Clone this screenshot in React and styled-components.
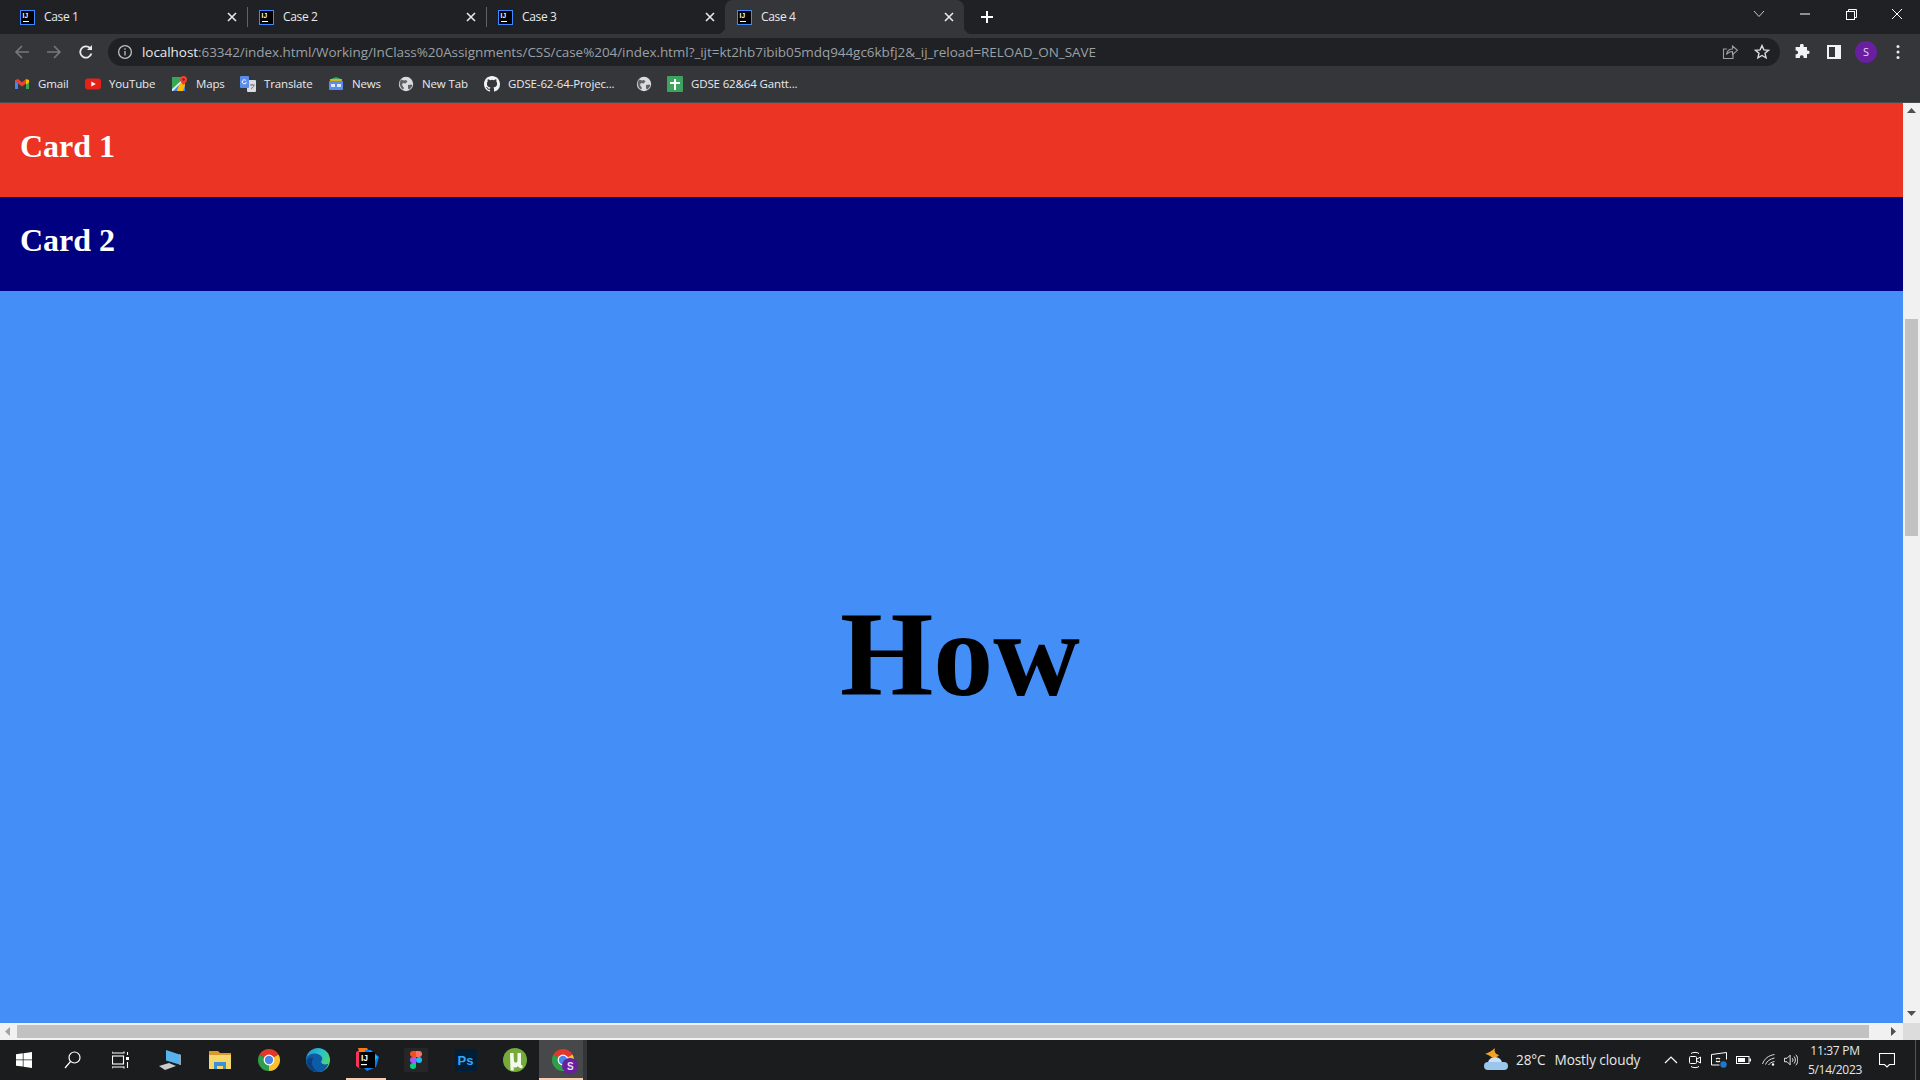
import React from "react";
import styled, { createGlobalStyle } from "styled-components";

const Global = createGlobalStyle`
  html, body { margin: 0; padding: 0; overflow: hidden; background: #fff; }
  #root { width: 1920px; height: 1080px; }
`;
const UI = `"Open Sans", "Noto Sans", sans-serif`;

const Screen = styled.div`width:1920px;height:1080px;display:flex;flex-direction:column;overflow:hidden;`;

/* tab strip */
const TabStrip = styled.div`height:34px;background:#202124;display:flex;padding-left:8px;flex:none;`;
const Tab = styled.div`
  width:239px;height:34px;box-sizing:border-box;display:flex;align-items:center;padding:0 7px 0 12px;position:relative;
  background:${p => (p.$active ? "#35363a" : "transparent")};
  border-radius:8px 8px 0 0;
  ${p => p.$sep && `&::after{content:"";position:absolute;right:-1px;top:7px;width:1px;height:20px;background:#5f6368;}`}
  ${p => p.$active && `
    &::before,&::after{content:"";position:absolute;bottom:0;width:8px;height:8px;}
    &::before{left:-8px;background:radial-gradient(circle at 0 0,#202124 8px,#35363a 8.5px);}
    &::after{right:-8px;background:radial-gradient(circle at 100% 0,#202124 8px,#35363a 8.5px);}
  `}
`;
const TabTitle = styled.span`flex:1;margin-left:9px;font:12px/16px ${UI};letter-spacing:-.35px;color:#e8eaed;`;
const TabClose = styled.span`width:16px;height:16px;display:flex;align-items:center;justify-content:center;`;
const NewTab = styled.span`width:28px;height:34px;margin-left:9px;display:flex;align-items:center;justify-content:center;`;
const WinControls = styled.div`margin-left:auto;display:flex;`;
const WinBtn = styled.span`width:46px;height:28px;display:flex;align-items:center;justify-content:center;`;

/* toolbar */
const Toolbar = styled.div`height:34px;background:#35363a;display:flex;align-items:flex-start;padding:4px 6px 0;box-sizing:border-box;flex:none;`;
const ToolBtn = styled.span`width:32px;height:28px;display:flex;align-items:center;justify-content:center;flex:none;`;
const Omnibox = styled.div`flex:1;height:28px;margin:0 6px;border-radius:14px;background:#202124;display:flex;align-items:center;padding-left:9px;padding-right:2px;`;
const Url = styled.div`flex:1;margin-left:9px;font:13.5px/18px ${UI};color:#9aa0a6;white-space:nowrap;letter-spacing:-.06px;`;
const Host = styled.span`color:#e8eaed;`;

/* bookmarks */
const Bookmarks = styled.div`height:35px;background:#35363a;border-bottom:1px solid #4b4c4f;box-sizing:border-box;display:flex;align-items:center;padding:0 0 2px 14px;flex:none;`;
const Bookmark = styled.div`width:${p => p.$w}px;display:flex;align-items:center;gap:8px;flex:none;font:11.5px/16px ${UI};letter-spacing:-.14px;color:#e8eaed;white-space:nowrap;`;

/* page */
const Viewport = styled.div`flex:none;height:920px;display:flex;`;
const Page = styled.main`flex:1;min-width:0;display:flex;flex-direction:column;overflow:hidden;`;
const Card = styled.section`height:94px;flex:none;background:${p => p.$bg};color:#fff;display:flex;align-items:center;padding:0 0 8px 20px;box-sizing:border-box;`;
const CardTitle = styled.h1`margin:0;font:700 32px/37px "Liberation Serif",serif;`;
const Stage = styled.section`flex:1;background:#448ef7;`;
const How = styled.h1`width:1920px;height:100%;margin:0;padding-bottom:5px;box-sizing:border-box;display:flex;align-items:center;justify-content:center;font:700 120px/138px "Liberation Serif",serif;color:#000;`;

const VBar = styled.div`width:17px;flex:none;background:#f1f1f1;display:flex;flex-direction:column;align-items:center;`;
const VThumb = styled.div`width:13px;height:217px;margin-top:199px;background:#c1c1c1;`;
const ArrowBox = styled.div`width:17px;height:17px;flex:none;display:flex;align-items:center;justify-content:center;${p => p.$end && "margin-top:auto;"}${p => p.$gap && "margin-left:17px;"}`;
const HRow = styled.div`height:17px;flex:none;display:flex;`;
const HBar = styled.div`flex:1;background:#f1f1f1;display:flex;align-items:center;`;
const HThumb = styled.div`flex:1;height:13px;background:#c1c1c1;`;
const Corner = styled.div`width:17px;background:#dcdcdc;`;

/* taskbar */
const Taskbar = styled.footer`height:40px;flex:none;background:#1b1c1d;display:flex;align-items:center;color:#fff;font:13.6px/18px ${UI};`;
const TaskBtn = styled.div`
  width:${p => p.$w || 49}px;height:40px;flex:none;box-sizing:border-box;display:flex;align-items:center;justify-content:center;position:relative;
  ${p => p.$active && "background:#47484a;border-right:4px solid #343536;"}
  ${p => p.$line && `&::after{content:"";position:absolute;bottom:0;left:${p.$active ? 0 : 4}px;right:${p.$active ? 0 : 5}px;height:2px;background:#f8cdb0;}`}
`;
const Tray = styled.div`margin-left:auto;display:flex;align-items:center;height:40px;`;
const Weather = styled.div`width:172px;flex:none;display:flex;align-items:center;color:#e8e8e8;white-space:nowrap;letter-spacing:-.1px;`;
const WeatherTemp = styled.span`margin:0 9px 0 8px;`;
const TrayIcon = styled.div`width:${p => p.$w}px;height:40px;flex:none;display:flex;align-items:center;justify-content:center;`;
const Clock = styled.div`width:74px;flex:none;font:12px/19px ${UI};letter-spacing:-.3px;color:#e6e6e6;white-space:nowrap;display:flex;flex-direction:column;align-items:center;`;
const ShowDesktop = styled.div`width:18px;height:40px;flex:none;box-sizing:border-box;position:relative;&::after{content:"";position:absolute;left:13px;top:0;bottom:0;width:1px;background:#555;}`;

/* icons */
const IJ = () => (
  <svg width="15" height="15" viewBox="0 0 15 15"><rect x=".5" y=".5" width="14" height="14" fill="#000" stroke="#3d8bff"/><text x="2.6" y="8" fill="#fff" fontFamily="Liberation Sans" fontWeight="700" fontSize="6.5">IJ</text><rect x="3" y="11" width="6" height="1" fill="#fff"/></svg>
);
const Stroke = ({ w = 16, h = 16, c = "#e8eaed", sw = 1.5, children }) => (
  <svg width={w} height={h} viewBox={`0 0 ${w} ${h}`} fill="none" stroke={c} strokeWidth={sw}>{children}</svg>
);
const X = () => <Stroke w={10} h={10} c="#e8eaed" sw={1.6}><path d="M1 1l8 8M9 1l-8 8"/></Stroke>;
const Back = ({ c }) => <Stroke c={c} sw={1.6}><path d="M15 8H2M8 2L2 8l6 6"/></Stroke>;
const Fwd = ({ c }) => <Stroke c={c} sw={1.6}><path d="M1 8h13M8 2l6 6-6 6"/></Stroke>;
const Reload = () => <Stroke sw={1.8}><path d="M13.4 9.6A5.7 5.7 0 1 1 12 4"/><path d="M14 1v5H9" fill="#e8eaed" stroke="none"/></Stroke>;
const Info = () => <Stroke c="#bdc1c6" sw={1.3}><circle cx="8" cy="8" r="6.4"/><path d="M8 7v4.5M8 4.3v1.4"/></Stroke>;
const Share = () => <Stroke c="#9aa0a6" sw={1.1}><path d="M11 10v4.5H1.5V5H5"/><path d="M4.5 10.5C5 7 7.5 5 10.5 5V2l5 4.3-5 4.2V7.5c-2.5 0-4.5 1-6 3z"/></Stroke>;
const Star = () => <Stroke c="#dadce0" sw={1.4}><path d="M8 1.6l1.9 4.3 4.6.4-3.5 3 1.1 4.6L8 11.5l-4.1 2.4L5 9.3l-3.5-3 4.6-.4z"/></Stroke>;
const Puzzle = () => <svg width="16" height="16" viewBox="0 0 16 16" fill="#f1f3f4"><path d="M6 1.2a1.9 1.9 0 0 1 3.7 0V3h3.3v3.4h1.2a1.9 1.9 0 0 1 0 3.7H13V14H9.6v-1.2a1.9 1.9 0 0 0-3.7 0V14H1.6v-3.7h1a1.9 1.9 0 0 0 0-3.7h-1V3H6z"/></svg>;
const SidePanel = () => <svg width="14" height="14" viewBox="0 0 14 14"><rect width="14" height="14" fill="#f1f3f4"/><rect x="2" y="2" width="6" height="10" fill="#35363a"/></svg>;
const Dots = () => <svg width="4" height="16" viewBox="0 0 4 16" fill="#e8eaed"><circle cx="2" cy="2.5" r="1.5"/><circle cx="2" cy="8" r="1.5"/><circle cx="2" cy="13.5" r="1.5"/></svg>;
const Avatar = styled.span`width:22px;height:22px;border-radius:50%;background:#6a1fa0;color:#e6d4f2;font:11px/22px ${UI};text-align:center;`;

const Gmail = () => <svg width="16" height="16" viewBox="0 0 16 16"><path d="M1 4.5V13h3V7z" fill="#4285f4"/><path d="M15 4.5V13h-3V7z" fill="#34a853"/><path d="M1 4l3-1 4 3.200L12 3l3 1v1L12 7.500 8 10.500 4 7.500 1 5z" fill="#ea4335"/><path d="M12 3.300l3 .7v2.500l-3 2z" fill="#fbbc04"/></svg>;
const YouTube = () => <svg width="16" height="16" viewBox="0 0 16 16"><rect y="2.500" width="16" height="11" rx="3" fill="#e62117"/><path d="M6.300 5.500l4.500 2.500-4.500 2.500z" fill="#fff"/></svg>;
const Maps = () => <svg width="16" height="16" viewBox="0 0 16 16"><rect y="1" width="13" height="14" fill="#34a853"/><path d="M0 15L13 3v12z" fill="#4285f4"/><path d="M7 9l6-6v6l-2 6H5z" fill="#fbbc04"/><path d="M0 13L11 3h2L1 15H0z" fill="#e8eaed"/><path d="M11.500 0a3.500 3.500 0 0 1 3.500 3.500c0 2.500-3.500 5.500-3.500 5.500S8 6 8 3.500A3.500 3.500 0 0 1 11.500 0z" fill="#ea4335"/><circle cx="11.500" cy="3.500" r="1.200" fill="#8a1c12"/></svg>;
const Translate = () => <svg width="16" height="16" viewBox="0 0 16 16"><rect x="7" y="4" width="9" height="12" rx="1" fill="#dadce0"/><rect width="9" height="12" rx="1" fill="#5b8def"/><path d="M6.300 6a2 2 0 1 1-.6-1.600" stroke="#fff" fill="none"/><path d="M10 9h4.500M12 8v1M14 9c-.5 2-1.500 3-3 3.500" stroke="#777" fill="none"/></svg>;
const News = () => <svg width="16" height="16" viewBox="0 0 16 16"><path d="M3 3l5-2 5 2v3H3z" fill="#34a853"/><path d="M2 3h12v5H2z" fill="#fbbc04" opacity=".8"/><rect x="1" y="5" width="14" height="9" rx="1" fill="#5b8def"/><rect x="3" y="8" width="4" height="3" fill="#dfe9fb"/><rect x="9" y="8" width="4" height="3" fill="#dfe9fb"/></svg>;
const Globe = () => <svg width="16" height="16" viewBox="0 0 16 16"><circle cx="8" cy="8" r="7.200" fill="#dadce0"/><path d="M3 3.500l3 1 2-.5 1.500 1.500-2 2-2.500-.5-1 2 2 3-1 1.500A7 7 0 0 1 3 3.500zM10 9l3.500-.5 1 1.500-3 3.500-1.500-1z" fill="#5f6368"/></svg>;
const GitHub = () => <svg width="16" height="16" viewBox="0 0 16 16" fill="#f1f3f4"><path d="M8 0C3.580 0 0 3.580 0 8c0 3.540 2.290 6.530 5.470 7.590.4.070.55-.17.55-.38 0-.19-.01-.82-.01-1.490-2.010.37-2.530-.49-2.690-.94-.09-.23-.48-.94-.82-1.130-.28-.15-.68-.52-.01-.53.63-.01 1.080.58 1.230.82.720 1.210 1.870.87 2.330.66.070-.52.280-.87.510-1.070-1.780-.2-3.640-.89-3.640-3.950 0-.87.310-1.590.820-2.150-.08-.2-.36-1.020.08-2.120 0 0 .67-.21 2.200.82a7.400 7.400 0 0 1 4 0c1.530-1.040 2.200-.82 2.200-.82.440 1.100.160 1.920.080 2.120.510.560.820 1.270.820 2.150 0 3.070-1.870 3.750-3.650 3.950.290.250.540.730.540 1.480 0 1.070-.01 1.930-.01 2.200 0 .21.150.46.550.38A8.010 8.010 0 0 0 16 8c0-4.420-3.580-8-8-8z"/></svg>;
const Sheets = () => <svg width="16" height="16" viewBox="0 0 16 16"><rect width="16" height="16" rx="1" fill="#3ea35f"/><path d="M7 3h2v3h4v2H9v6H7V8H3V6h4z" fill="#fff"/></svg>;

const ChromeShape = () => (
  <>
    <path d="M2.470 6.500A11 11 0 0 1 21.530 6.500L12 12z" fill="#e0392b"/>
    <path d="M21.530 6.500A11 11 0 0 1 12 23L12 12z" fill="#fbc02d"/>
    <path d="M12 23A11 11 0 0 1 2.470 6.500L12 12z" fill="#2f9e48"/>
    <circle cx="12" cy="12" r="5.400" fill="#fff"/>
    <circle cx="12" cy="12" r="4.200" fill="#4a86e8"/>
  </>
);
const Chrome = () => <svg width="24" height="24" viewBox="0 0 24 24"><ChromeShape/></svg>;
const ChromeProfile = () => (
  <svg width="40" height="32" viewBox="-10 -4 40 32"><ChromeShape/><circle cx="19" cy="18" r="8" fill="#6a1fa0"/><text x="16" y="21.500" fill="#eadcf5" fontSize="10" fontWeight="700" fontFamily="Liberation Sans">S</text></svg>
);
const Edge = () => (
  <svg width="24" height="24" viewBox="0 0 24 24">
    <defs><linearGradient id="eg" x1="0" y1="0" x2="1" y2=".6"><stop offset="0" stopColor="#1f8fd8"/><stop offset=".55" stopColor="#2bc3c8"/><stop offset="1" stopColor="#58d36a"/></linearGradient></defs>
    <circle cx="12" cy="12" r="12" fill="url(#eg)"/>
    <path d="M.2 10.500C2 6.500 6 5 9.500 5.500c4 .6 7 3 6.800 5.500-.2 1.500-1.200 2-1.200 3 0 1.500 2 2.500 4 2.500 1 0 2.200-.2 3.200-.8C21 20.500 17 24 12 24 5 24 0 18 .2 10.500z" fill="#0d5ba6"/>
    <path d="M7.500 10c-3 3-2 10 4.500 14C5 24 .5 19 .3 12.500c1.500-2 4.500-3.500 7.200-2.500z" fill="#0b3f7e"/>
  </svg>
);
const Idea = () => <svg width="26" height="26" viewBox="0 0 26 26"><path d="M2 5l8-4 5 4-9 17-4-3z" fill="#fe315d"/><path d="M4 1h9l3 6-9 4z" fill="#f97a12"/><path d="M11 3h6l8 7-3 10-9 4-4-4z" fill="#087cfa"/><path d="M15 3l9 7-5 6z" fill="#07c3f2"/><rect x="5" y="5" width="16" height="16" fill="#000"/><text x="7" y="13.500" fill="#fff" fontFamily="Liberation Sans" fontWeight="700" fontSize="8.500">IJ</text><rect x="7" y="17" width="6" height="1.200" fill="#fff"/></svg>;
const Figma = () => <svg width="24" height="24" viewBox="0 0 24 24"><rect width="24" height="24" rx="2" fill="#262626"/><path d="M6 6a3 3 0 0 1 3-3h3v6H9a3 3 0 0 1-3-3z" fill="#f24e1e"/><path d="M12 3h3a3 3 0 0 1 0 6h-3z" fill="#ff7262"/><path d="M6 12a3 3 0 0 1 3-3h3v6H9a3 3 0 0 1-3-3z" fill="#a259ff"/><circle cx="15" cy="12" r="3" fill="#1abcfe"/><path d="M6 18a3 3 0 0 1 3-3h3v3a3 3 0 0 1-6 0z" fill="#0acf83"/></svg>;
const Ps = () => <svg width="22" height="22" viewBox="0 0 22 22"><rect width="22" height="22" rx="3" fill="#001e36"/><text x="2.500" y="16" fill="#31a8ff" fontFamily="Liberation Sans" fontWeight="700" fontSize="13">Ps</text></svg>;
const UTorrent = () => <svg width="24" height="24" viewBox="0 0 24 24"><circle cx="12" cy="12" r="12" fill="#76ab3c"/><path d="M7 5h3.500l.5 8c.2 2 3 2 3.500 0V5H18v11c0 1 .5 1.500 1.500 1.200V20c-2 .5-4-.2-4.500-2-1 1.500-3 2-4.500 1l.5 3.500H7.500z" fill="#f4f8ee"/></svg>;
const Folder = () => <svg width="22" height="18" viewBox="0 0 22 18"><path d="M0 0h9l2 2h11v16H0z" fill="#d99a28"/><rect y="4" width="22" height="14" fill="#f6d76b"/><path d="M5 18v-7h12v7h-3v-3H8v3z" fill="#3d8fd6"/></svg>;
const Laptop = () => <svg width="24" height="22" viewBox="0 0 24 22"><path d="M8 1l15 5v10L8 11.500z" fill="#55b4ee"/><path d="M21 5l2 1v10l-2-.7z" fill="#9aa3ad"/><path d="M1 17l10-3 7 3-11 4z" fill="#c9cbcd"/></svg>;
const WinLogo = () => <svg width="16" height="16" viewBox="0 0 16 16" fill="#fff"><path d="M0 2.300l6.800-1v6.200H0zM7.500 1.200L16 0v7.500H7.500zM0 8.300h6.800v6.300L0 13.700zM7.500 8.300H16V16l-8.500-1.200z"/></svg>;
const Search = () => <Stroke w={17} h={18} c="#fff" sw={1.2}><circle cx="10.500" cy="6.500" r="5.500"/><path d="M6.500 10.500L1 17"/></Stroke>;
const TaskView = () => <Stroke w={17} h={18} c="#fff" sw={1.1}><path d="M0 2h12v-1.500M0 2V.5M0 16h12v1.500M0 16v1.500"/><rect x=".5" y="5" width="11" height="8"/><rect x="14" y="6" width="3" height="3" fill="#fff" stroke="none"/><path d="M15.500 1v3M15.500 11v6"/></Stroke>;
const WeatherIcon = () => <svg width="24" height="24" viewBox="0 0 24 24"><path d="M11 0c-1 3 0 6 4 7-1 2-6 4-9 1C4 7 3 6 1 6c3-1 7-3 10-6z" fill="#f2a227"/><ellipse cx="11" cy="15" rx="7" ry="6" fill="#c9dff5"/><path d="M0 18a4 4 0 0 1 4-4h16a4 4 0 0 1 0 8H4a4 4 0 0 1-4-4z" fill="#9cc5ec"/></svg>;
const Chevron = () => <Stroke w={14} h={8} c="#fff" sw={1.2}><path d="M1 7l6-6 6 6"/></Stroke>;
const Meet = () => <Stroke w={12} h={18} c="#fff" sw={1}><path d="M2 2.500C4 1 8 1 10 2.500M2 15.500c2 1.500 6 1.500 8 0"/><rect x=".5" y="5.500" width="7" height="7" rx="1"/><path d="M8 8l3.500-2v6L8 10"/></Stroke>;
const Screenpad = () => <svg width="16" height="16" viewBox="0 0 16 16" fill="none" stroke="#fff"><path d="M.5 2.500L15.500 .5v7M.5 2.500v10.500h8"/><path d="M5 7c1-1 3-1 4 0M9 9c-1 1-3 1-4 0" strokeWidth="1.200"/><circle cx="12.500" cy="12.500" r="3.200" fill="#1f78c8" stroke="none"/></svg>;
const Battery = () => <svg width="15" height="8" viewBox="0 0 15 8"><rect x=".5" y=".5" width="12.500" height="7" fill="none" stroke="#fff"/><rect x="2" y="2" width="7" height="4" fill="#fff"/><rect x="13.500" y="2.500" width="1.500" height="3" fill="#fff"/></svg>;
const Wifi = () => <Stroke w={13} h={12} c="#ddd" sw={1}><path d="M.5 10C2.500 4.500 6.500 1.500 12.500.500M3.500 10.500C5 7 8 5 12.500 4M6.500 11c1-1.500 3-3 6-3.500"/><circle cx="11" cy="10.500" r="1.200" fill="#fff" stroke="none"/></Stroke>;
const Speaker = () => <Stroke w={16} h={14} c="#fff" sw={1}><path d="M.5 5h3L7 1.500v11L3.500 9h-3zM9.500 5c1 1 1 3 0 4M11.500 3c2 2 2 6 0 8M13.500 1c3 3 3 9 0 12"/></Stroke>;
const Notify = () => <Stroke w={16} h={15} c="#fff" sw={1.1}><path d="M.5.500h15v11h-5L8 14l-2.500-2.500h-5z"/></Stroke>;

const Tri = ({ dir }) => {
  const d = { up: "M4.500 1L9 6H0z", down: "M0 1h9L4.500 6z", left: "M6 0v9L1 4.500z", right: "M1 0v9l5-4.500z" }[dir];
  return <svg width="9" height="9" viewBox="0 0 9 9" fill={dir === "left" ? "#a3a3a3" : "#505050"}><path d={d}/></svg>;
};

const tabs = ["Case 1", "Case 2", "Case 3", "Case 4"];
const marks = [
  [71, <Gmail/>, "Gmail"], [87, <YouTube/>, "YouTube"], [68, <Maps/>, "Maps"], [88, <Translate/>, "Translate"],
  [70, <News/>, "News"], [86, <Globe/>, "New Tab"], [152, <GitHub/>, "GDSE-62-64-Projec..."], [31, <Globe/>, ""], [140, <Sheets/>, "GDSE 62&64 Gantt..."],
];
const taskApps = [
  [<WinLogo/>, 48], [<Search/>, 48], [<TaskView/>, 48], [<Laptop/>, 52], [<Folder/>, 48], [<Chrome/>, 49], [<Edge/>, 49],
  [<Idea/>, 49, "on"], [<Figma/>, 50], [<Ps/>, 49], [<UTorrent/>, 49], [<ChromeProfile/>, 48, "active"],
];

export default function App() {
  return (
    <>
      <Global/>
      <Screen>
        <TabStrip>
          {tabs.map((t, i) => (
            <Tab key={t} $active={i === 3} $sep={i < 2}>
              <IJ/><TabTitle>{t}</TabTitle><TabClose><X/></TabClose>
            </Tab>
          ))}
          <NewTab><Stroke w={14} h={14} c="#fff" sw={2}><path d="M7 1v12M1 7h12"/></Stroke></NewTab>
          <WinControls>
            <WinBtn><Stroke w={12} h={8} c="#c8c8c8" sw={1}><path d="M1 1l5 5.500L11 1"/></Stroke></WinBtn>
            <WinBtn><Stroke w={10} h={2} c="#fff" sw={1}><path d="M0 1h10"/></Stroke></WinBtn>
            <WinBtn><Stroke w={11} h={11} c="#fff" sw={1}><rect x=".5" y="2.500" width="8" height="8"/><path d="M2.500 2.500V.5h8v8h-2"/></Stroke></WinBtn>
            <WinBtn><Stroke w={12} h={12} c="#fff" sw={1}><path d="M1 1l10 10M11 1L1 11"/></Stroke></WinBtn>
          </WinControls>
        </TabStrip>
        <Toolbar>
          <ToolBtn><Back c="#75787c"/></ToolBtn>
          <ToolBtn><Fwd c="#75787c"/></ToolBtn>
          <ToolBtn><Reload/></ToolBtn>
          <Omnibox>
            <Info/>
            <Url><Host>localhost</Host>:63342/index.html/Working/InClass%20Assignments/CSS/case%204/index.html?_ijt=kt2hb7ibib05mdq944gc6kbfj2&amp;_ij_reload=RELOAD_ON_SAVE</Url>
            <ToolBtn><Share/></ToolBtn>
            <ToolBtn><Star/></ToolBtn>
          </Omnibox>
          <ToolBtn><Puzzle/></ToolBtn>
          <ToolBtn><SidePanel/></ToolBtn>
          <ToolBtn><Avatar>S</Avatar></ToolBtn>
          <ToolBtn><Dots/></ToolBtn>
        </Toolbar>
        <Bookmarks>
          {marks.map(([w, icon, label], i) => (
            <Bookmark key={i} $w={w}>{icon}{label && <span>{label}</span>}</Bookmark>
          ))}
        </Bookmarks>
        <Viewport>
          <Page>
            <Card $bg="#ec3424"><CardTitle>Card 1</CardTitle></Card>
            <Card $bg="#000080"><CardTitle>Card 2</CardTitle></Card>
            <Stage><How>How</How></Stage>
          </Page>
          <VBar>
            <ArrowBox><Tri dir="up"/></ArrowBox>
            <VThumb/>
            <ArrowBox $end><Tri dir="down"/></ArrowBox>
          </VBar>
        </Viewport>
        <HRow>
          <HBar>
            <ArrowBox><Tri dir="left"/></ArrowBox>
            <HThumb/>
            <ArrowBox $gap><Tri dir="right"/></ArrowBox>
          </HBar>
          <Corner/>
        </HRow>
        <Taskbar>
          {taskApps.map(([icon, w, state], i) => (
            <TaskBtn key={i} $w={w} $line={!!state} $active={state === "active"}>{icon}</TaskBtn>
          ))}
          <Tray>
            <Weather><WeatherIcon/><WeatherTemp>28°C</WeatherTemp>Mostly cloudy</Weather>
            <TrayIcon $w={30}><Chevron/></TrayIcon>
            <TrayIcon $w={18}><Meet/></TrayIcon>
            <TrayIcon $w={30}><Screenpad/></TrayIcon>
            <TrayIcon $w={18}><Battery/></TrayIcon>
            <TrayIcon $w={32}><Wifi/></TrayIcon>
            <TrayIcon $w={14}><Speaker/></TrayIcon>
            <Clock><span>11:37 PM</span><span>5/14/2023</span></Clock>
            <TrayIcon $w={30}><Notify/></TrayIcon>
            <ShowDesktop/>
          </Tray>
        </Taskbar>
      </Screen>
    </>
  );
}
